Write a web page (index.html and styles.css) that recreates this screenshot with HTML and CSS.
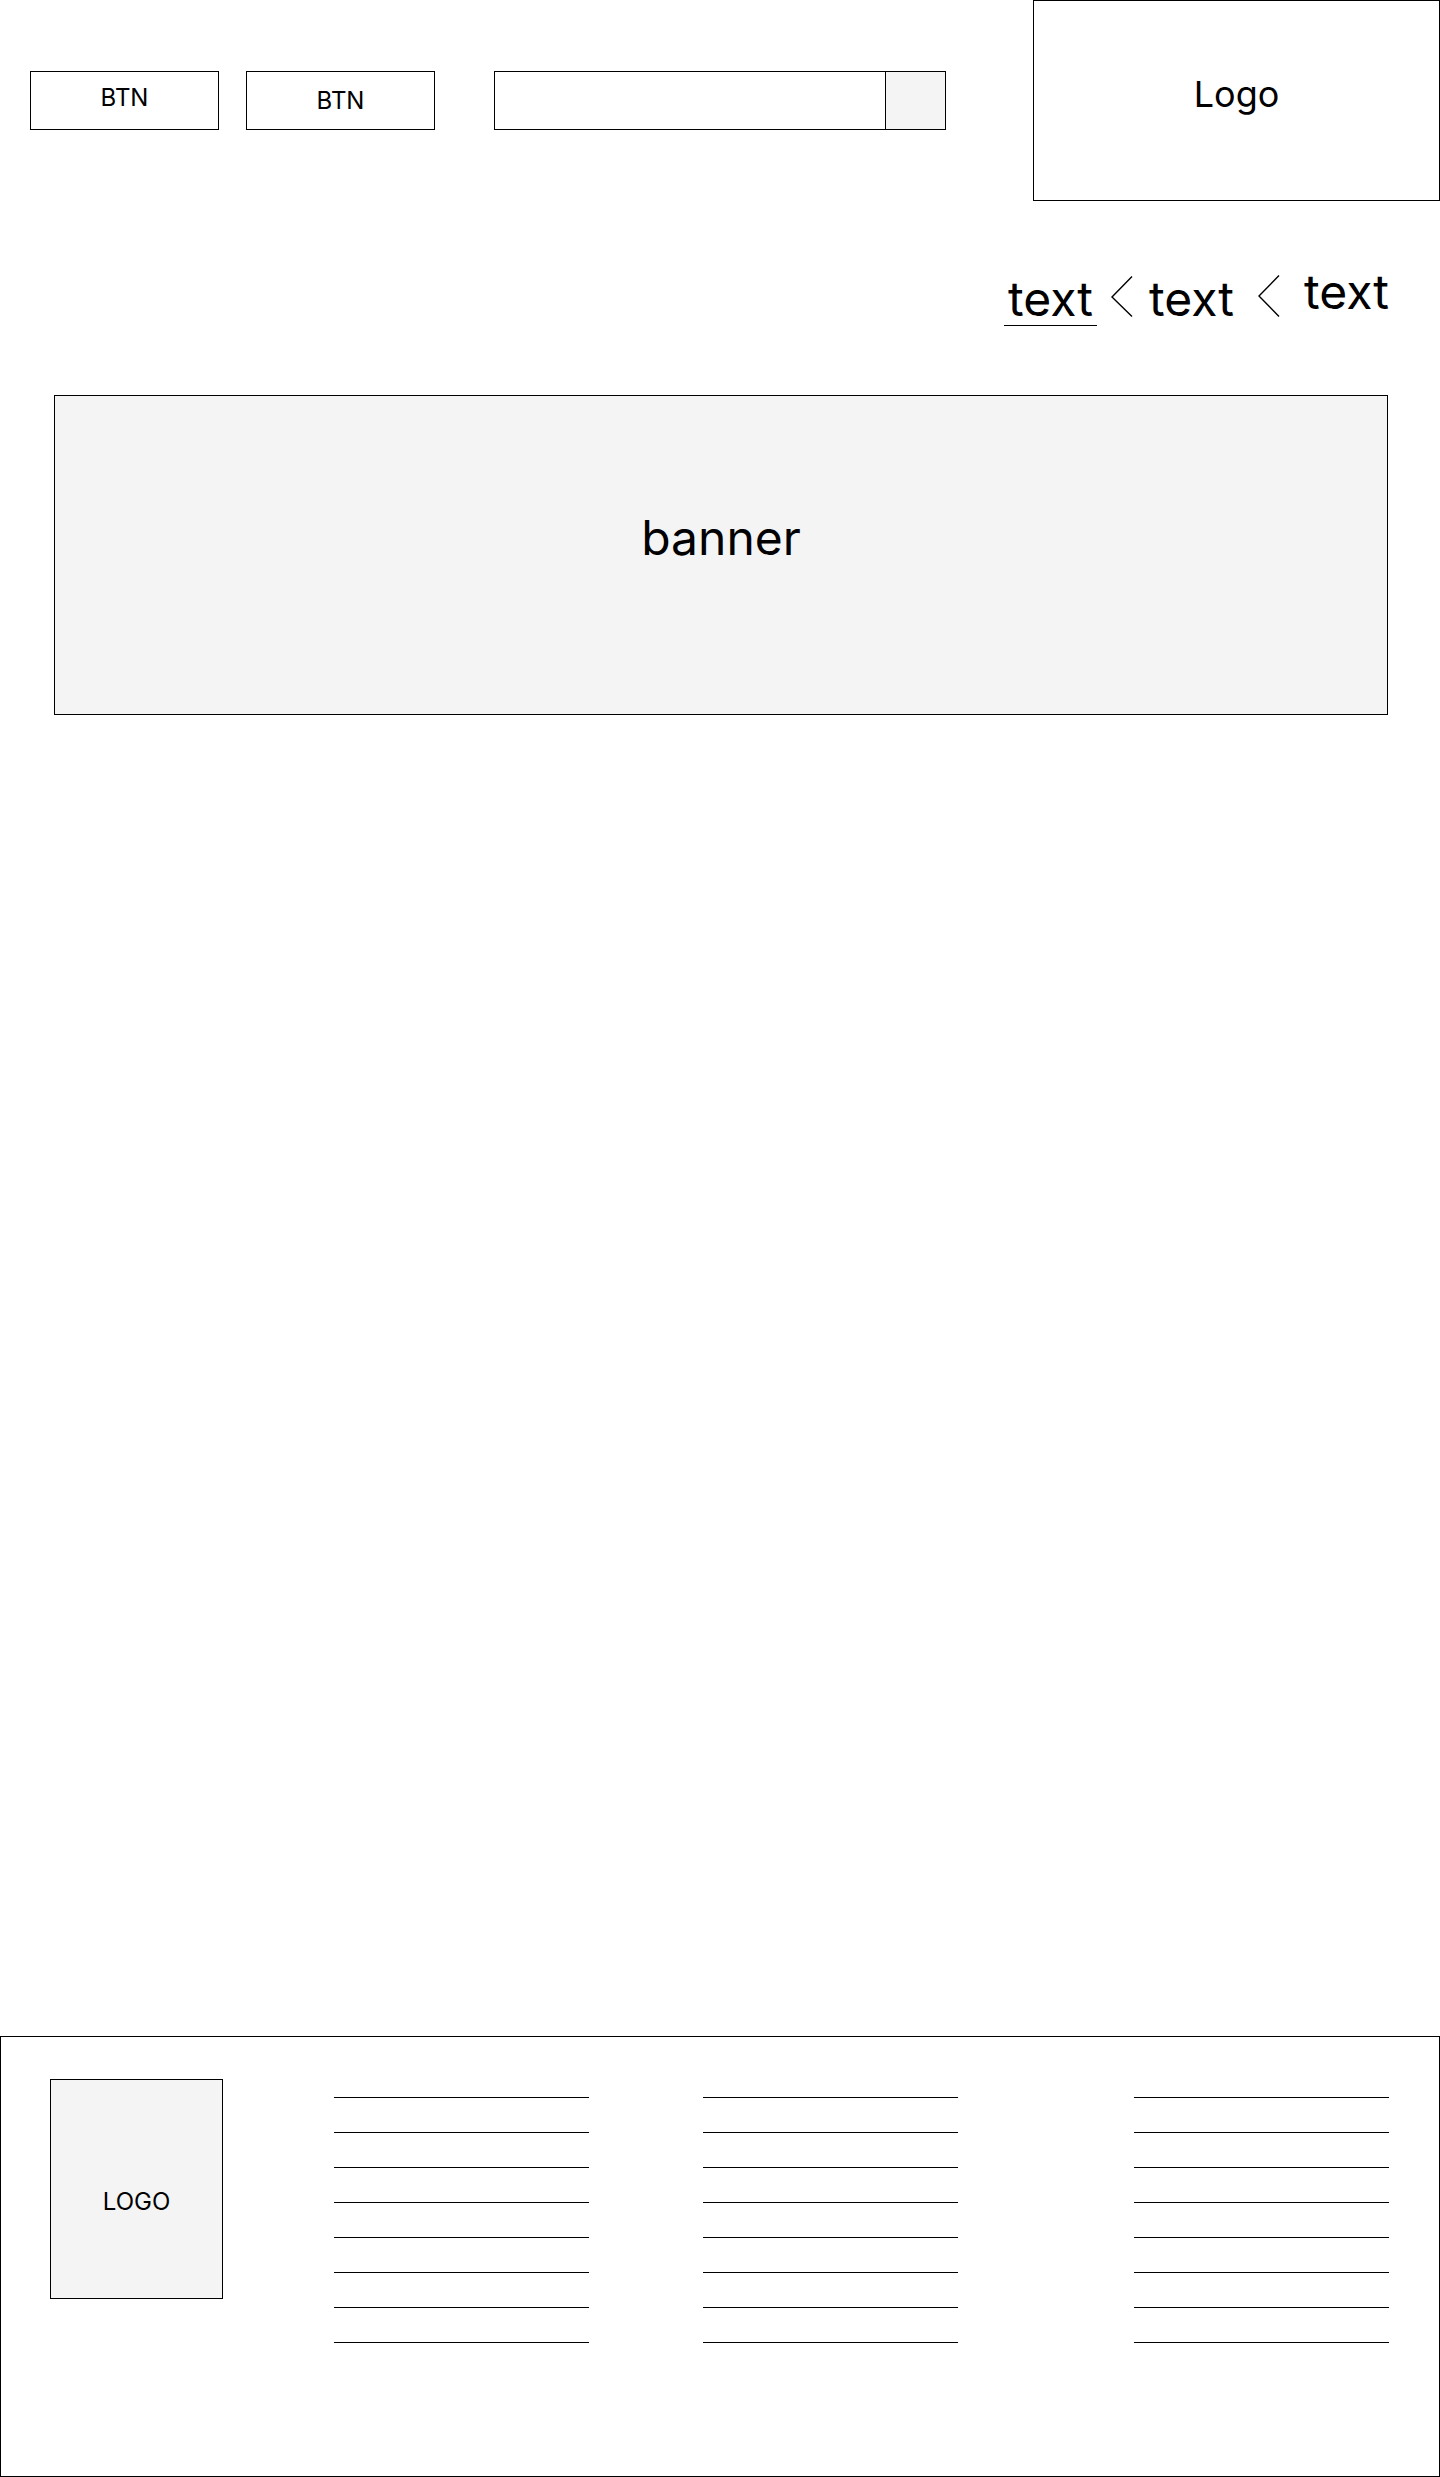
FILE: index.html
```html
<!DOCTYPE html>
<html lang="en">
<head>
<meta charset="utf-8">
<title>Wireframe</title>
<link rel="stylesheet" href="styles.css">
</head>
<body>
<header class="header">
  <div class="btn btn-first">BTN</div>
  <div class="btn btn-second">BTN</div>
  <div class="search">
    <div class="search-input"></div>
    <div class="search-button"></div>
  </div>
  <div class="logo">Logo</div>
</header>

<nav class="breadcrumb">
  <span class="crumb crumb-current">text</span>
  <svg class="chev chev-1" width="22" height="41" viewBox="0 0 22 41"><polyline points="21,0.5 1,21 21,40.5" fill="none" stroke="#000" stroke-width="1.4"/></svg>
  <span class="crumb crumb-mid">text</span>
  <svg class="chev chev-2" width="22" height="42" viewBox="0 0 22 42"><polyline points="21,0.5 1,21 21,41.5" fill="none" stroke="#000" stroke-width="1.4"/></svg>
  <span class="crumb crumb-last">text</span>
</nav>

<section class="banner">banner</section>

<footer class="footer">
  <div class="footer-logo">LOGO</div>
  <ul class="links links-1">
    <li></li><li></li><li></li><li></li><li></li><li></li><li></li><li></li>
  </ul>
  <ul class="links links-2">
    <li></li><li></li><li></li><li></li><li></li><li></li><li></li><li></li>
  </ul>
  <ul class="links links-3">
    <li></li><li></li><li></li><li></li><li></li><li></li><li></li><li></li>
  </ul>
</footer>
</body>
</html>
```

FILE: styles.css
```css
* {
  box-sizing: border-box;
}

html, body {
  margin: 0;
  padding: 0;
}

body {
  width: 1440px;
  min-height: 2477px;
  display: flex;
  flex-direction: column;
  background: #fff;
  color: #000;
  font-family: Inter, "Noto Sans", "Liberation Sans", sans-serif;
}

/* ---------- header ---------- */
.header {
  display: flex;
  align-items: flex-start;
  padding-left: 30px;
  height: 201px;
}

.btn {
  width: 189px;
  height: 59px;
  margin-top: 71px;
  border: 1px solid #000;
  display: flex;
  align-items: center;
  justify-content: center;
  font-size: 24px;
  line-height: 29px;
}

.btn-first {
  padding-bottom: 6px;
}

.btn-second {
  margin-left: 27px;
}

.search {
  display: flex;
  width: 452px;
  height: 59px;
  margin-top: 71px;
  margin-left: 59px;
  border: 1px solid #000;
}

.search-input {
  flex: 1;
}

.search-button {
  width: 60px;
  border-left: 1px solid #000;
  background: #f4f4f4;
}

.logo {
  margin-left: auto;
  width: 407px;
  height: 201px;
  border: 1px solid #000;
  text-align: center;
  font-size: 36px;
  line-height: 44px;
  padding-top: 71px;
}

/* ---------- breadcrumb ---------- */
.breadcrumb {
  display: flex;
  justify-content: flex-end;
  align-items: flex-start;
  margin-top: 65px;
  padding-right: 51px;
  font-size: 48px;
  line-height: 52px;
}

.crumb {
  display: block;
}

.crumb-current {
  margin-top: 7px;
  padding: 0 4px;
  border-bottom: 1px solid #000;
}

.chev {
  display: block;
  flex: none;
}

.chev-1 {
  margin-top: 10px;
  margin-left: 14px;
  margin-right: 16px;
}

.crumb-mid {
  margin-top: 7px;
}

.chev-2 {
  margin-top: 9px;
  margin-left: 24px;
  margin-right: 24px;
}

.crumb-last {
  margin-top: 0;
}

/* ---------- banner ---------- */
.banner {
  margin-top: 69px;
  margin-left: 54px;
  width: 1334px;
  height: 320px;
  border: 1px solid #000;
  background: #f4f4f4;
  text-align: center;
  font-size: 48px;
  line-height: 58px;
  padding-top: 113px;
}

/* ---------- footer ---------- */
.footer {
  margin-top: auto;
  width: 1440px;
  height: 441px;
  border: 1px solid #000;
  display: flex;
  align-items: flex-start;
  padding-top: 42px;
  padding-left: 49px;
}

.footer-logo {
  width: 173px;
  height: 220px;
  border: 1px solid #000;
  background: #f4f4f4;
  text-align: center;
  font-size: 24px;
  line-height: 29px;
  padding-top: 107px;
}

.links {
  list-style: none;
  margin: 18px 0 0 0;
  padding: 0;
  width: 255px;
}

.links li {
  height: 35px;
  border-top: 1px solid #000;
}

.links-1 {
  margin-left: 111px;
}

.links-2 {
  margin-left: 114px;
}

.links-3 {
  margin-left: 176px;
}
```
